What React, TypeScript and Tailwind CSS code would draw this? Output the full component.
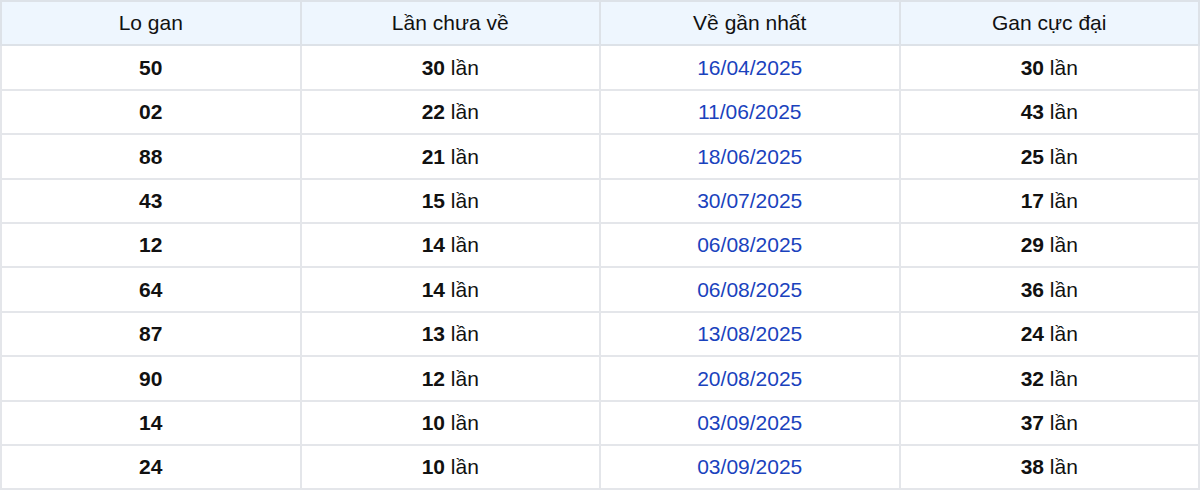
const ROWS = [
  { lo: '50', last: 30, date: '16/04/2025', max: 30 },
  { lo: '02', last: 22, date: '11/06/2025', max: 43 },
  { lo: '88', last: 21, date: '18/06/2025', max: 25 },
  { lo: '43', last: 15, date: '30/07/2025', max: 17 },
  { lo: '12', last: 14, date: '06/08/2025', max: 29 },
  { lo: '64', last: 14, date: '06/08/2025', max: 36 },
  { lo: '87', last: 13, date: '13/08/2025', max: 24 },
  { lo: '90', last: 12, date: '20/08/2025', max: 32 },
  { lo: '14', last: 10, date: '03/09/2025', max: 37 },
  { lo: '24', last: 10, date: '03/09/2025', max: 38 },
];

const HEADERS = ['Lo gan', 'Lần chưa về', 'Về gần nhất', 'Gan cực đại'];

export default function App() {
  return (
    <div className="w-[1200px] bg-white font-['Liberation_Sans',Arial,sans-serif] text-[21px] text-[#111]">
      <table className="w-full table-fixed border-collapse">
        <thead>
          <tr className="h-[44.4px] bg-[#eef6fe]">
            {HEADERS.map((h) => (
              <th key={h} className="border-2 border-[#dde2e8] font-normal">
                {h}
              </th>
            ))}
          </tr>
        </thead>
        <tbody>
          {ROWS.map((r, i) => (
            <tr key={i} className="h-[44.4px]">
              <td className="border-2 border-[#e4e6ea] text-center font-bold">{r.lo}</td>
              <td className="border-2 border-[#e4e6ea] text-center">
                <span className="font-bold">{r.last}</span> lần
              </td>
              <td className="border-2 border-[#e4e6ea] text-center text-[#1a42bd]">{r.date}</td>
              <td className="border-2 border-[#e4e6ea] text-center">
                <span className="font-bold">{r.max}</span> lần
              </td>
            </tr>
          ))}
        </tbody>
      </table>
    </div>
  );
}
